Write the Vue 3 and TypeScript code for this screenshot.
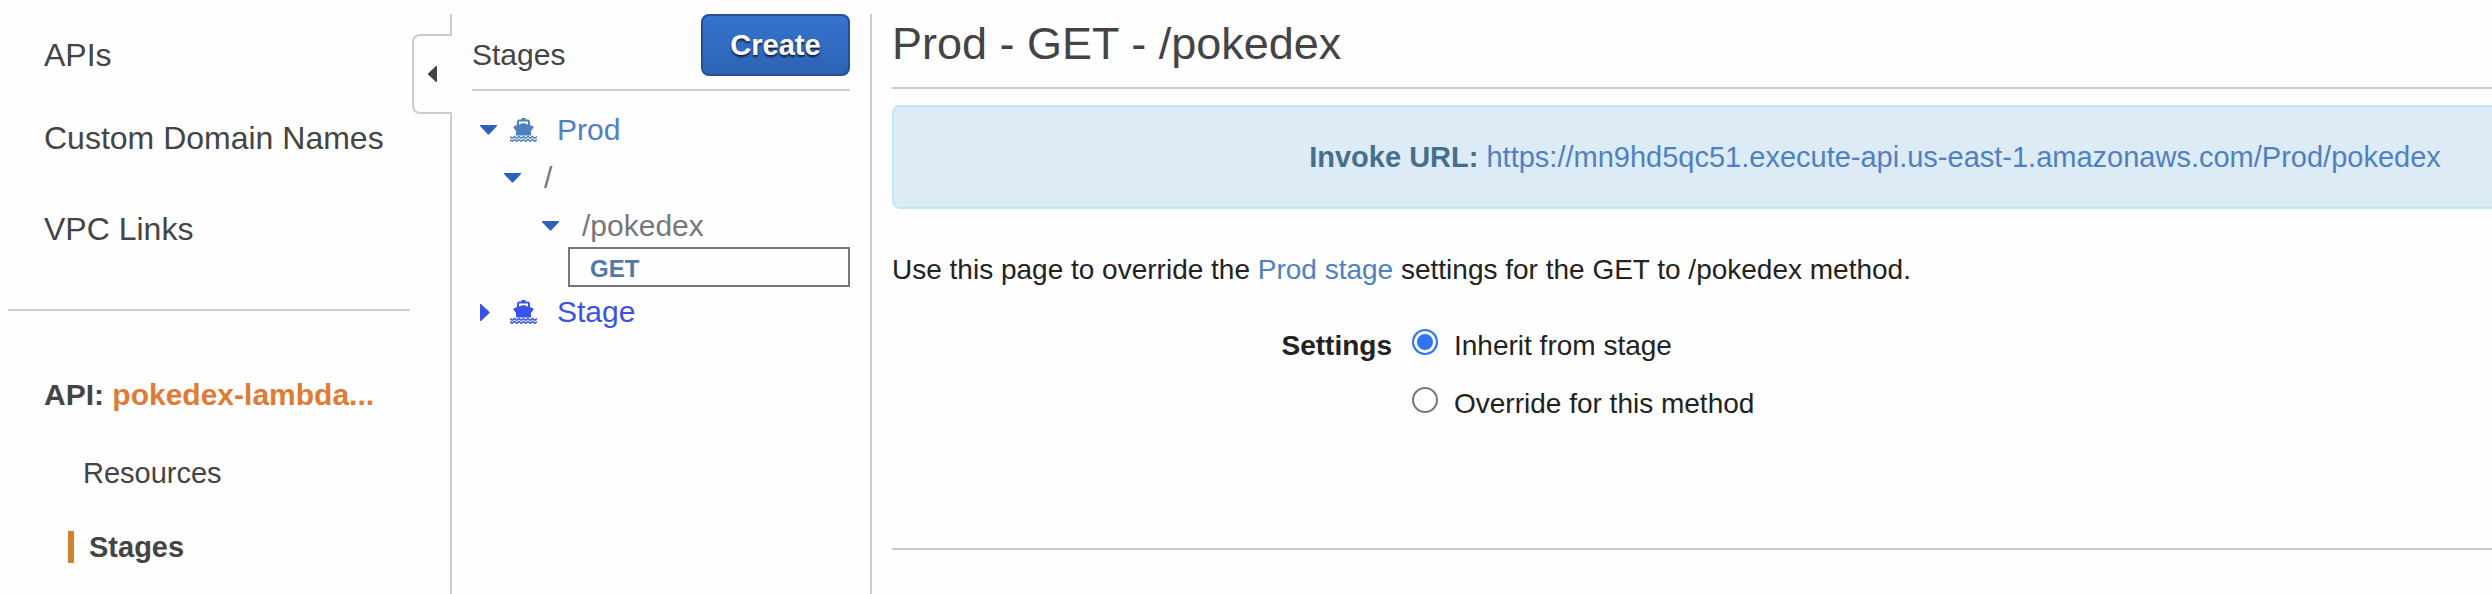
<script setup lang="ts">
import { ref } from 'vue'

interface TreeRow {
  label: string
  level: number
  open: boolean
  ship: boolean
  tone: string
}

const mainLinks: string[] = ['APIs', 'Custom Domain Names', 'VPC Links']

const tree: TreeRow[] = [
  { label: 'Prod', level: 0, open: true, ship: true, tone: 'link' },
  { label: '/', level: 1, open: true, ship: false, tone: 'path' },
  { label: '/pokedex', level: 2, open: true, ship: false, tone: 'path' },
  { label: 'GET', level: 3, open: false, ship: false, tone: 'method' },
  { label: 'Stage', level: 0, open: false, ship: true, tone: 'active' },
]

const options = [
  { value: 'inherit', label: 'Inherit from stage' },
  { value: 'override', label: 'Override for this method' },
]
const setting = ref('inherit')
</script>

<template>
  <div class="console">
    <aside class="sidebar">
      <nav>
        <ul class="main-links">
          <li v-for="link in mainLinks" :key="link"><a href="#">{{ link }}</a></li>
        </ul>
        <hr class="rule" />
        <p class="api">API: <a href="#">pokedex-lambda...</a></p>
        <ul class="sub-links">
          <li><a href="#">Resources</a></li>
          <li class="current"><a href="#" aria-current="page">Stages</a></li>
        </ul>
      </nav>
      <button class="collapse" type="button" aria-label="Collapse navigation">
        <svg width="9" height="16" viewBox="0 0 9 16"><path d="M9 0V16H8L0 8.500V7.500L8 0Z" fill="#444" /></svg>
      </button>
    </aside>

    <section class="stages">
      <header class="stages-head">
        <h2>Stages</h2>
        <button class="create" type="button">Create</button>
      </header>
      <ul class="tree">
        <li v-for="row in tree" :key="row.label" :class="['row', 'level-' + row.level, row.tone]">
          <button v-if="row.tone !== 'method'" class="twisty" type="button" :aria-expanded="row.open" :aria-label="'Toggle ' + row.label">
            <svg v-if="row.open" width="17" height="10" viewBox="0 0 17 10"><path d="M0 0H17V1L9 9.500H8L0 1Z" /></svg>
            <svg v-else width="10" height="17" viewBox="0 0 10 17"><path d="M0 0H1L9.500 8V9L1 17H0Z" /></svg>
          </button>
          <svg v-if="row.ship" class="ship" width="27" height="24" viewBox="0 0 27 24" fill="currentColor">
            <path d="M11.500 0H15.500V1.500H18.500L20 3V7L23.500 8.500V9.500L21 13V17.500H6V13L3.500 9.500V8.500L7 7V3L8.500 1.500H11.500ZM9 3.500V6.500L13.500 5L18 6.500V3.500Z" fill-rule="evenodd" />
            <path d="M0 18.500L2.200 20.300L4.500 18.500L6.700 20.300L9 18.500L11.200 20.300L13.500 18.500L15.700 20.300L18 18.500L20.200 20.300L22.500 18.500L24.700 20.300L27 18.500M0 21.500L2.200 23.300L4.500 21.500L6.700 23.300L9 21.500L11.200 23.300L13.500 21.500L15.700 23.300L18 21.500L20.200 23.300L22.500 21.500L24.700 23.300L27 21.500" fill="none" stroke="currentColor" stroke-width="1.500" />
          </svg>
          <a href="#">{{ row.label }}</a>
        </li>
      </ul>
    </section>

    <main class="detail">
      <h1>Prod - GET - /pokedex</h1>
      <div class="banner">
        <strong>Invoke URL:</strong> <a href="#">https://mn9hd5qc51.execute-api.us-east-1.amazonaws.com/Prod/pokedex</a>
      </div>
      <p class="intro">
        Use this page to override the <a href="#">Prod stage</a> settings for the GET to /pokedex method.
      </p>
      <div class="settings" role="radiogroup" aria-labelledby="settings-label">
        <span id="settings-label" class="settings-label">Settings</span>
        <div class="options">
          <label v-for="option in options" :key="option.value" class="option">
            <input v-model="setting" type="radio" name="setting" :value="option.value" />
            <span>{{ option.label }}</span>
          </label>
        </div>
      </div>
      <hr class="rule" />
    </main>
  </div>
</template>

<style>
body {
  margin: 0;
  background: #fefefe;
}
</style>

<style scoped>
.console {
  box-sizing: border-box;
  display: flex;
  min-height: 100vh;
  padding-top: 14px;
  color: #444;
  font-family: "Helvetica Neue", Helvetica, "Liberation Sans", Arial, sans-serif;
  font-size: 28px;
}
a {
  color: inherit;
  text-decoration: none;
}
ul {
  margin: 0;
  padding: 0;
  list-style: none;
}
h1,
h2,
p {
  margin: 0;
  font-weight: 400;
}
button {
  padding: 0;
  font-family: inherit;
  cursor: pointer;
}
.rule {
  height: 2px;
  margin: 0;
  border: 0;
  background: #ccc;
}

.sidebar {
  position: relative;
  box-sizing: border-box;
  flex: 0 0 452px;
  padding: 21px 40px 0 8px;
  border-right: 2px solid #ccc;
}
.main-links {
  display: grid;
  padding: 0 0 60px 36px;
  font-size: 32px;
  line-height: 40px;
}
.main-links li + li {
  margin-top: 43px;
}
.main-links li:last-child {
  margin-top: 51px;
}
.api {
  padding: 64px 0 42px 36px;
  font-size: 30px;
  font-weight: 700;
  line-height: 40px;
  white-space: nowrap;
}
.api a {
  color: #df7b35;
}
.sub-links {
  display: grid;
  gap: 42px;
  padding-left: 60px;
  font-size: 29px;
  line-height: 32px;
}
.sub-links li {
  padding-left: 15px;
}
.sub-links .current {
  overflow: hidden;
  border-left: 6px solid #d57f2f;
  font-weight: 700;
}
.collapse {
  position: absolute;
  top: 20px;
  right: -2px;
  box-sizing: border-box;
  display: grid;
  place-items: center;
  width: 40px;
  height: 80px;
  padding-right: 2px;
  border: 2px solid #ccc;
  border-right-width: 0;
  border-radius: 8px 0 0 8px;
  background: #fefefe;
}

.stages {
  box-sizing: border-box;
  flex: 0 0 420px;
  padding: 0 20px;
  border-right: 2px solid #ccc;
}
.stages-head {
  display: flex;
  align-items: flex-start;
  justify-content: space-between;
  padding-bottom: 13px;
  border-bottom: 2px solid #ccc;
}
h2 {
  padding-top: 21px;
  font-size: 30px;
  line-height: 40px;
}
.create {
  width: 149px;
  height: 62px;
  border: 2px solid #244f91;
  border-radius: 8px;
  background: linear-gradient(#3673d0, #2d63b3);
  color: #fff;
  font-size: 29px;
  font-weight: 700;
  text-shadow: 0 2px 2px rgba(0, 0, 0, 0.7);
}
.tree {
  padding-top: 19px;
  font-size: 30px;
  line-height: 40px;
}
.row {
  display: flex;
  align-items: center;
  height: 40px;
  padding-left: 8px;
}
.row.link,
.row.level-1 {
  margin-bottom: 8px;
}
.level-1 {
  padding-left: 32px;
}
.level-2 {
  padding-left: 70px;
}
.twisty {
  display: flex;
  flex: 0 0 40px;
  border: 0;
  background: none;
  fill: #2c63b8;
}
.ship {
  flex: none;
  margin: 0 20px 0 -10px;
}
.link {
  color: #4f81c1;
}
.path {
  color: #777;
}
.active {
  margin-top: 5px;
  color: #3b52e8;
}
.active .twisty {
  fill: #3b52e8;
}
.method {
  box-sizing: border-box;
  margin: 1px 0 0 96px;
  padding: 4px 0 0 20px;
  border: 2px solid #777;
  color: #5078a8;
  font-size: 24px;
  font-weight: 700;
}

.detail {
  flex: 1;
  min-width: 0;
  padding-left: 20px;
  color: #222;
}
h1 {
  padding: 2px 0 15px;
  border-bottom: 2px solid #ccc;
  color: #444;
  font-size: 45px;
  line-height: 56px;
}
.banner {
  margin-top: 16px;
  padding: 32px 0 32px 364px;
  border: 2px solid #c0e8f0;
  border-right: 0;
  border-radius: 8px 0 0 8px;
  background: #ddebf6;
  color: #44708e;
  font-size: 29px;
  line-height: 36px;
  text-align: center;
  white-space: nowrap;
}
.banner a,
.intro a {
  color: #4f81c1;
}
.intro {
  padding-top: 41px;
  line-height: 40px;
}
.settings {
  display: flex;
  gap: 20px;
  padding: 36px 0 124px;
  line-height: 40px;
}
.settings-label {
  flex: 0 0 500px;
  font-weight: 700;
  text-align: right;
}
.options {
  display: grid;
  gap: 18px;
}
.option {
  display: flex;
  align-items: flex-start;
  gap: 16px;
}
.option input {
  box-sizing: border-box;
  width: 26px;
  height: 26px;
  margin: 3px 0 0;
  border: 2px solid #767676;
  border-radius: 50%;
  background: #fff;
  appearance: none;
}
.option input:checked {
  border-color: #2f74f6;
  background: #2f74f6;
  box-shadow: inset 0 0 0 3px #fff;
}
</style>
